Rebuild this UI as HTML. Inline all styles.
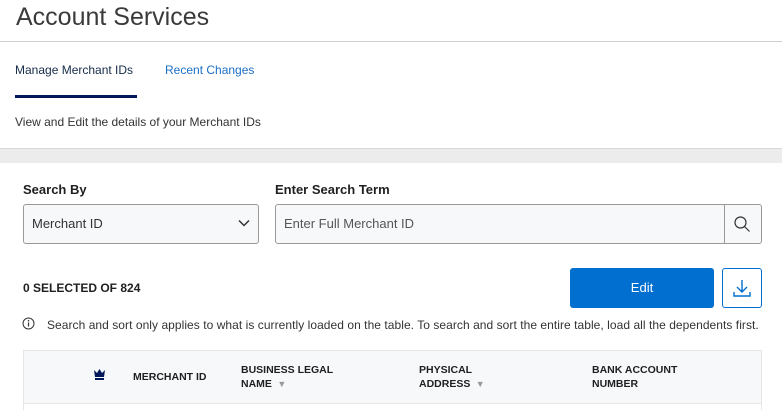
<!DOCTYPE html>
<html><head><style>
*{margin:0;padding:0;box-sizing:border-box}
body{width:782px;height:410px;overflow:hidden;background:#fff;font-family:"Liberation Sans",Arial,sans-serif;color:#1f1f1f;position:relative}
.a{position:absolute}
</style></head><body>
<div class="a" style="left:16px;top:3px;font-size:25px;color:#3a3a3a;font-weight:300">Account Services</div>
<div class="a" style="left:0;top:41px;width:782px;height:1px;background:#cfcfcf"></div>
<div class="a" style="left:15px;top:63px;font-size:12px;color:#152b4a">Manage Merchant IDs</div>
<div class="a" style="left:165px;top:63px;font-size:12px;color:#1a6fc6">Recent Changes</div>
<div class="a" style="left:15px;top:95px;width:122px;height:3px;background:#00175a"></div>
<div class="a" style="left:15px;top:115px;font-size:12px;color:#333">View and Edit the details of your Merchant IDs</div>
<div class="a" style="left:0;top:148px;width:782px;height:15px;background:#ececed;border-top:1px solid #d8d8d8"></div>
<div class="a" style="left:23px;top:182px;font-size:13px;font-weight:bold">Search By</div>
<div class="a" style="left:275px;top:182px;font-size:13px;font-weight:bold">Enter Search Term</div>
<div class="a" style="left:23px;top:204px;width:236px;height:40px;background:#f7f8f9;border:1px solid #999;border-radius:3px"></div>
<div class="a" style="left:32px;top:216px;font-size:13px;color:#333">Merchant ID</div>
<svg class="a" style="left:238px;top:219px" width="12" height="8"><path d="M1 1.5l5 5 5-5" fill="none" stroke="#333" stroke-width="1.5"/></svg>
<div class="a" style="left:275px;top:204px;width:487px;height:40px;background:#f7f8f9;border:1px solid #999;border-radius:3px"></div>
<div class="a" style="left:724px;top:205px;width:1px;height:38px;background:#999"></div>
<div class="a" style="left:284px;top:216px;font-size:13px;color:#555">Enter Full Merchant ID</div>
<svg class="a" style="left:733px;top:215px" width="18" height="18"><circle cx="7.5" cy="7.5" r="5.5" fill="none" stroke="#333" stroke-width="1.2"/><path d="M11.5 11.5l5 5" stroke="#333" stroke-width="1.2"/></svg>
<div class="a" style="left:23px;top:281px;font-size:12px;font-weight:bold">0 SELECTED OF 824</div>
<div class="a" style="left:570px;top:268px;width:144px;height:40px;background:#006fcf;border-radius:3px;color:#fff;font-size:13px;text-align:center;line-height:40px">Edit</div>
<div class="a" style="left:722px;top:268px;width:40px;height:40px;border:1px solid #006fcf;border-radius:3px"></div>
<svg class="a" style="left:731px;top:277px" width="22" height="22"><path d="M11 3v12M6 10l5 5 5-5M3 15v4h16v-4" fill="none" stroke="#006fcf" stroke-width="1.4"/></svg>
<svg class="a" style="left:22px;top:317px" width="13" height="13"><circle cx="6.5" cy="6.5" r="5.5" fill="none" stroke="#333" stroke-width="1"/><path d="M6.5 5.5v4" stroke="#333" stroke-width="1.2"/><circle cx="6.5" cy="3.8" r=".8" fill="#333"/></svg>
<div class="a" style="left:47px;top:318px;font-size:12px;color:#333;letter-spacing:0.05px;white-space:nowrap">Search and sort only applies to what is currently loaded on the table. To search and sort the entire table, load all the dependents first.</div>
<div class="a" style="left:23px;top:350px;width:739px;height:60px;border:1px solid #e6e6e6;background:#f7f8f9"></div>
<div class="a" style="left:24px;top:403px;width:737px;height:7px;background:#fff;border-top:1px solid #e6e6e6"></div>
<svg class="a" style="left:93px;top:368px" width="13" height="13"><path d="M1 2l3 3 2.5-4 2.5 4 3-3-1 7H2z" fill="#00175a"/><rect x="2" y="10" width="9" height="2" fill="#00175a"/></svg>
<div class="a" style="left:133px;top:371px;font-size:10.5px;font-weight:bold">MERCHANT ID</div>
<div class="a" style="left:241px;top:363px;font-size:10.5px;font-weight:bold;line-height:14px">BUSINESS LEGAL<br>NAME <span style="color:#999;font-size:9px">&nbsp;▼</span></div>
<div class="a" style="left:419px;top:363px;font-size:10.5px;font-weight:bold;line-height:14px">PHYSICAL<br>ADDRESS <span style="color:#999;font-size:9px">&nbsp;▼</span></div>
<div class="a" style="left:592px;top:363px;font-size:10.5px;font-weight:bold;line-height:14px">BANK ACCOUNT<br>NUMBER</div>
</body></html>
